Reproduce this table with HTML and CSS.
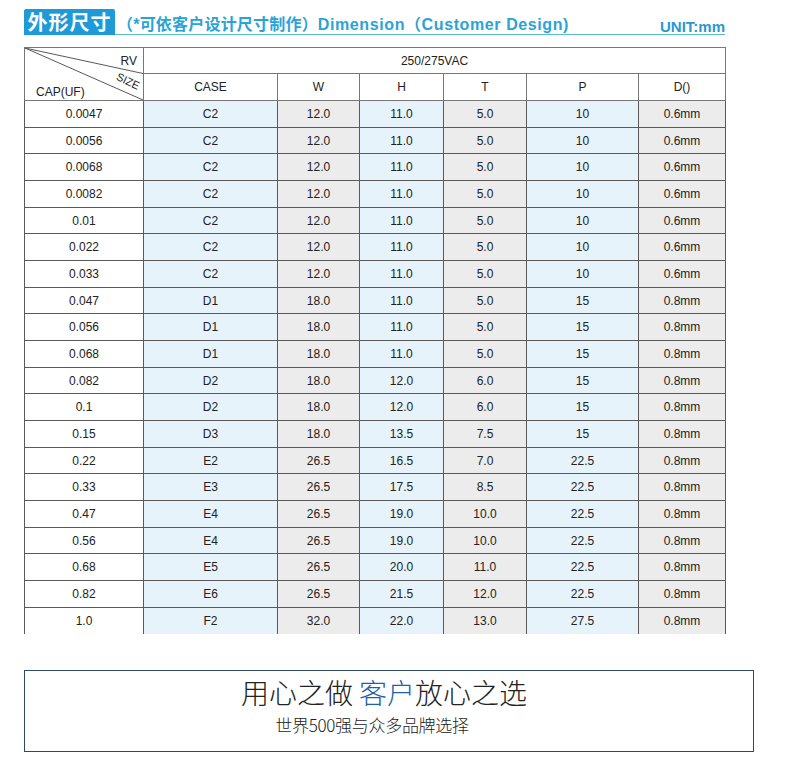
FILE: index.html
```html
<!DOCTYPE html>
<html lang="zh-CN">
<head>
<meta charset="utf-8">
<title>外形尺寸</title>
<link rel="stylesheet" href="styles.css">
</head>
<body>
<div class="page">
  <div class="title-bar">
    <div class="title-box">外形尺寸</div>
    <div class="title-sub">（*可依客户设计尺寸制作）<span class="en">Dimension（Customer Design)</span></div>
    <div class="unit">UNIT:mm</div>
  </div>

  <table class="spec">
    <colgroup>
      <col class="c-cap"><col class="c-case"><col class="c-w"><col class="c-h"><col class="c-t"><col class="c-p"><col class="c-d">
    </colgroup>
    <thead>
      <tr class="h1">
        <th class="corner" rowspan="2">
          <svg class="diag" width="119" height="53" viewBox="0 0 119 53" preserveAspectRatio="none">
            <line x1="0" y1="0" x2="119" y2="26" stroke="#555" stroke-width="1"/>
            <line x1="0" y1="0" x2="119" y2="53" stroke="#555" stroke-width="1"/>
          </svg>
          <span class="rv">RV</span>
          <span class="size">SIZE</span>
          <span class="cap">CAP(UF)</span>
        </th>
        <th class="rvval" colspan="6">250/275VAC</th>
      </tr>
      <tr class="h2">
        <th>CASE</th><th>W</th><th>H</th><th>T</th><th>P</th><th>D()</th>
      </tr>
    </thead>
    <tbody>
      <tr><td>0.0047</td><td>C2</td><td>12.0</td><td>11.0</td><td>5.0</td><td>10</td><td>0.6mm</td></tr>
      <tr><td>0.0056</td><td>C2</td><td>12.0</td><td>11.0</td><td>5.0</td><td>10</td><td>0.6mm</td></tr>
      <tr><td>0.0068</td><td>C2</td><td>12.0</td><td>11.0</td><td>5.0</td><td>10</td><td>0.6mm</td></tr>
      <tr><td>0.0082</td><td>C2</td><td>12.0</td><td>11.0</td><td>5.0</td><td>10</td><td>0.6mm</td></tr>
      <tr><td>0.01</td><td>C2</td><td>12.0</td><td>11.0</td><td>5.0</td><td>10</td><td>0.6mm</td></tr>
      <tr><td>0.022</td><td>C2</td><td>12.0</td><td>11.0</td><td>5.0</td><td>10</td><td>0.6mm</td></tr>
      <tr><td>0.033</td><td>C2</td><td>12.0</td><td>11.0</td><td>5.0</td><td>10</td><td>0.6mm</td></tr>
      <tr><td>0.047</td><td>D1</td><td>18.0</td><td>11.0</td><td>5.0</td><td>15</td><td>0.8mm</td></tr>
      <tr><td>0.056</td><td>D1</td><td>18.0</td><td>11.0</td><td>5.0</td><td>15</td><td>0.8mm</td></tr>
      <tr><td>0.068</td><td>D1</td><td>18.0</td><td>11.0</td><td>5.0</td><td>15</td><td>0.8mm</td></tr>
      <tr><td>0.082</td><td>D2</td><td>18.0</td><td>12.0</td><td>6.0</td><td>15</td><td>0.8mm</td></tr>
      <tr><td>0.1</td><td>D2</td><td>18.0</td><td>12.0</td><td>6.0</td><td>15</td><td>0.8mm</td></tr>
      <tr><td>0.15</td><td>D3</td><td>18.0</td><td>13.5</td><td>7.5</td><td>15</td><td>0.8mm</td></tr>
      <tr><td>0.22</td><td>E2</td><td>26.5</td><td>16.5</td><td>7.0</td><td>22.5</td><td>0.8mm</td></tr>
      <tr><td>0.33</td><td>E3</td><td>26.5</td><td>17.5</td><td>8.5</td><td>22.5</td><td>0.8mm</td></tr>
      <tr><td>0.47</td><td>E4</td><td>26.5</td><td>19.0</td><td>10.0</td><td>22.5</td><td>0.8mm</td></tr>
      <tr><td>0.56</td><td>E4</td><td>26.5</td><td>19.0</td><td>10.0</td><td>22.5</td><td>0.8mm</td></tr>
      <tr><td>0.68</td><td>E5</td><td>26.5</td><td>20.0</td><td>11.0</td><td>22.5</td><td>0.8mm</td></tr>
      <tr><td>0.82</td><td>E6</td><td>26.5</td><td>21.5</td><td>12.0</td><td>22.5</td><td>0.8mm</td></tr>
      <tr class="last"><td>1.0</td><td>F2</td><td>32.0</td><td>22.0</td><td>13.0</td><td>27.5</td><td>0.8mm</td></tr>
    </tbody>
  </table>

  <div class="slogan">
    <div class="slogan-main">用心之做 <span class="hl">客户</span>放心之选</div>
    <div class="slogan-sub">世界500强与众多品牌选择</div>
  </div>
</div>
</body>
</html>
```

FILE: styles.css
```css
html, body {
  margin: 0;
  padding: 0;
  background: #fff;
}
.page {
  width: 790px;
  height: 766px;
  padding: 9px 0 0 24px;
  box-sizing: border-box;
  font-family: "Liberation Sans", Arial, "Noto Sans CJK SC", sans-serif;
  color: #222;
}
.title-bar {
  display: flex;
  align-items: flex-end;
  width: 701px;
  height: 25px;
  border-bottom: 1px solid #5bbad8;
}
.title-box {
  width: 91px;
  height: 26px;
  margin-bottom: -1px;
  background: #1f9ad8;
  color: #fff;
  font-family: "Noto Sans CJK SC", sans-serif;
  font-weight: 700;
  font-size: 20px;
  line-height: 26px;
  letter-spacing: 1px;
  text-align: center;
  border-radius: 2px 2px 0 0;
}
.title-sub {
  margin-left: 2px;
  color: #2aa3d6;
  font-family: "Liberation Sans", "Noto Sans CJK SC", sans-serif;
  font-weight: 700;
  font-size: 16px;
  line-height: 18px;
  letter-spacing: 0.2px;
}
.title-sub .en {
  letter-spacing: 0.6px;
}
.unit {
  margin-left: auto;
  color: #2b98cf;
  font-weight: 700;
  font-size: 15px;
  line-height: 20px;
  margin-bottom: -3px;
}
.spec {
  margin-top: 12px;
  border-collapse: collapse;
  table-layout: fixed;
  width: 701px;
  font-size: 12px;
}
.c-cap { width: 119px; }
.c-case { width: 134px; }
.c-w { width: 82px; }
.c-h { width: 84px; }
.c-t { width: 83px; }
.c-p { width: 112px; }
.c-d { width: 87px; }
.spec th, .spec td {
  border: 1px solid #5a5a5a;
  padding: 0;
  text-align: center;
  font-weight: 400;
  color: #222;
}
.spec thead th {
  border-color: #777;
}
.h1 { height: 26px; }
.h2 { height: 27px; }
.corner {
  position: relative;
  background: #fff;
}
.diag {
  position: absolute;
  left: 0;
  top: 0;
  width: 100%;
  height: 100%;
}
.rv {
  position: absolute;
  right: 6px;
  top: 6px;
}
.size {
  position: absolute;
  right: 3px;
  top: 27px;
  font-size: 11px;
  transform: rotate(26deg);
}
.cap {
  position: absolute;
  left: 11px;
  bottom: 1px;
}
.spec tbody tr { height: 26.68px; }
.spec tbody td:nth-child(1) { background: #fff; }
.spec tbody td:nth-child(2),
.spec tbody td:nth-child(4),
.spec tbody td:nth-child(6) { background: #e6f3fb; }
.spec tbody td:nth-child(3),
.spec tbody td:nth-child(5),
.spec tbody td:nth-child(7) { background: #ececec; }
.spec tbody tr.last td {
  border-bottom: none;
}
.slogan {
  margin-top: 36px;
  width: 730px;
  height: 82px;
  box-sizing: border-box;
  border: 1px solid #2c4a60;
  display: flex;
  flex-direction: column;
  align-items: center;
  font-family: "Noto Sans CJK SC", sans-serif;
  font-weight: 300;
}
.slogan-main {
  margin-top: 1px;
  margin-right: 10px;
  font-size: 28px;
  line-height: 41px;
  color: #222;
}
.hl { color: #1d5fae; }
.slogan-sub {
  margin-top: -1px;
  margin-right: 34px;
  font-size: 17px;
  line-height: 25px;
  color: #222;
  letter-spacing: -0.3px;
}
```
